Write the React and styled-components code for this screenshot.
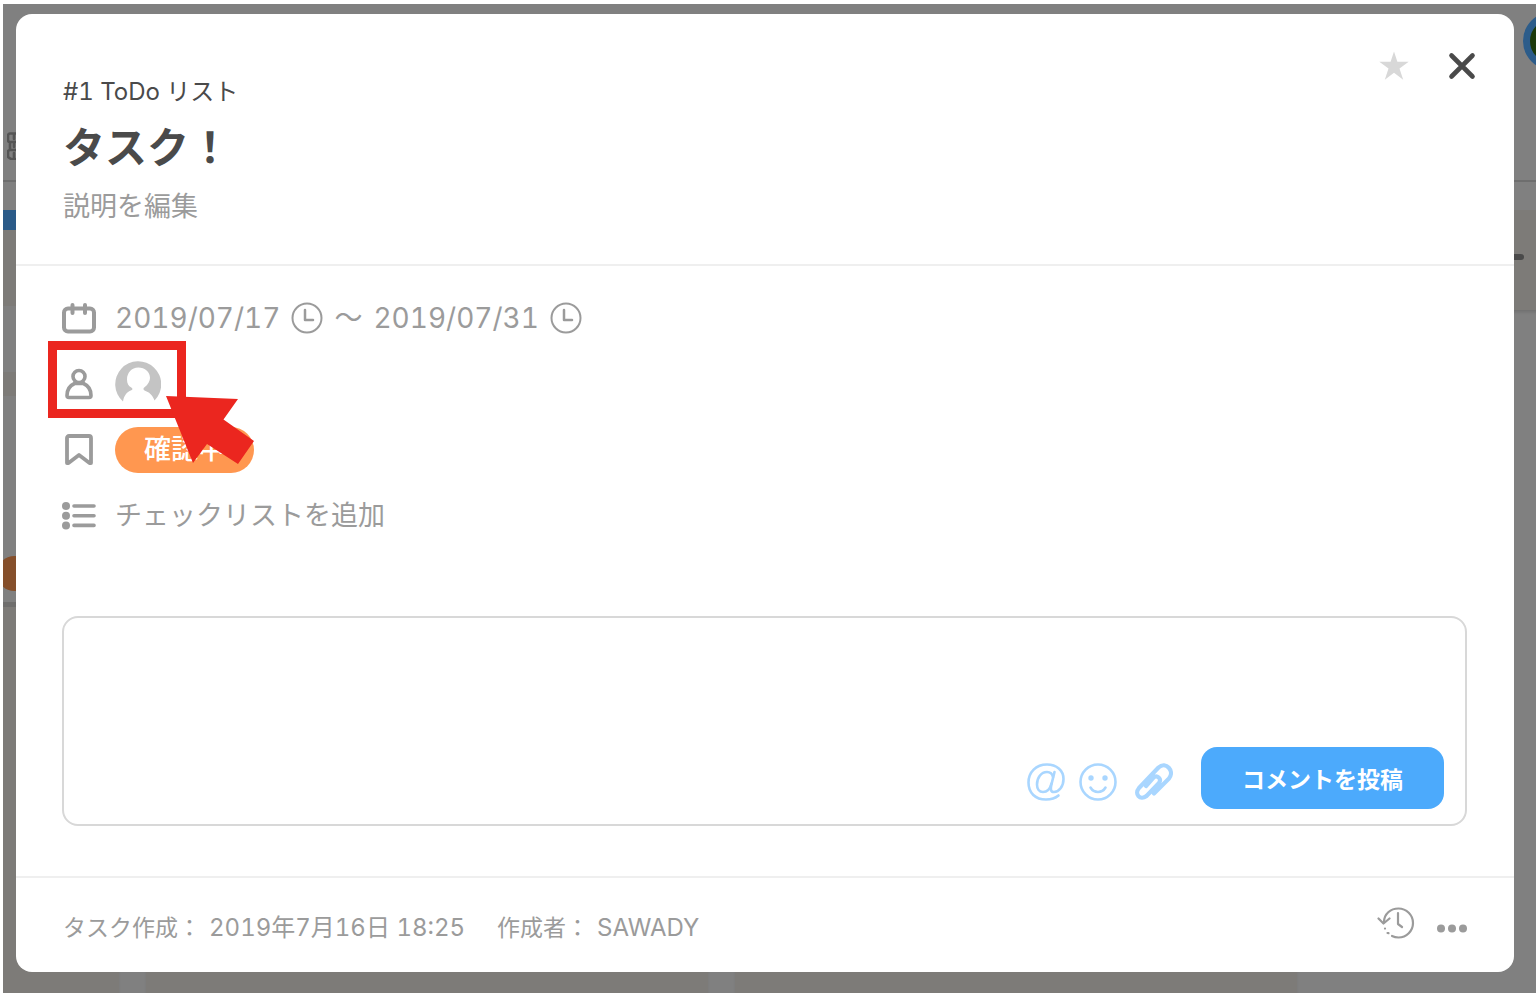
import React from "react";
import styled, { createGlobalStyle } from "styled-components";

const GlobalStyle = createGlobalStyle`
  *, *::before, *::after { box-sizing: border-box; }
  body {
    margin: 0;
    background: #fff;
    font-family: Inter, "Noto Sans CJK JP", sans-serif;
    font-variant-numeric: tabular-nums;
    color: #9b9b9b;
  }
  button {
    font: inherit;
    color: inherit;
    border: 0;
    padding: 0;
    background: none;
    cursor: pointer;
  }
  svg { display: block; flex: none; }
  p, h1 { margin: 0; }
`;

const Stage = styled.div`
  display: grid;
  grid-template: minmax(calc(100vh - 6px), auto) / minmax(0, 1fr);
  margin: 4px 0 2px 3px;
  background: #808080;
  overflow: hidden;
`;

const Backdrop = styled.div`
  grid-area: 1 / 1;
  display: flex;
  flex-direction: column;
  min-width: 0;
  overflow: hidden;
`;

const TopBar = styled.div`
  display: flex;
  flex-direction: column;
  justify-content: space-between;
  height: 178px;
  padding: 8px 0 20px 4px;
  border-bottom: 2px solid #6e6e6e;
`;

const Avatar = styled.div`
  align-self: flex-end;
  width: 58px;
  height: 58px;
  margin-right: -45px;
  border: 7px solid #2c5c8a;
  border-radius: 50%;
  background: #1c3a0c;
`;

const Board = styled.div`
  flex: 1;
  display: flex;
  align-items: stretch;
  gap: 27px;
  margin: 28px 0 0 -446px;
`;

const Column = styled.div`
  flex: none;
  align-self: ${(p) => (p.$short ? "flex-start" : "stretch")};
  display: flex;
  flex-direction: column;
  width: 562px;
  height: ${(p) => (p.$short ? "100px" : "auto")};
  background: #7d7b78;
  box-shadow: 0 3px 3px -1px #707070;
`;

const ColumnBar = styled.div`
  height: 20px;
  background: #2a5a88;
`;

const BoardCard = styled.div`
  display: flex;
  flex-direction: column;
  justify-content: flex-end;
  height: ${(p) => p.$height}px;
  margin-top: ${(p) => p.$gap}px;
  padding: 0 0 11px 440px;
  background: #808080;
  border-bottom: ${(p) => (p.$edge ? "5px solid #6f6e6d" : "0")};
`;

const BoardTag = styled.div`
  width: 90px;
  height: 35px;
  border-radius: 18px;
  background: #854f2b;
`;

const AddMark = styled.div`
  width: 30px;
  height: 6px;
  margin: 44px 0 0 170px;
  border-radius: 3px;
  background: #4a4a4a;
`;

const Dialog = styled.section`
  grid-area: 1 / 1;
  z-index: 1;
  display: flex;
  flex-direction: column;
  margin: 10px 22px 21px 13px;
  border-radius: 16px;
  background: #fff;
`;

const Header = styled.header`
  display: flex;
  justify-content: space-between;
  align-items: flex-start;
  padding: 36px 36px 36px 47px;
  border-bottom: 2px solid #efefef;
`;

const Heading = styled.div`
  padding-top: 24px;
`;

const ListName = styled.p`
  color: #4a4a4a;
  font-size: 24px;
  line-height: 36px;
`;

const Title = styled.h1`
  color: #4a4a4a;
  font-size: 42px;
  font-weight: 700;
  line-height: 76px;
`;

const TextButton = styled.button`
  display: block;
  font-size: 27px;
  line-height: 42px;
`;

const Actions = styled.div`
  display: flex;
  align-items: center;
  gap: ${(p) => p.$gap}px;
`;

const IconButton = styled.button`
  display: flex;
  align-items: center;
  justify-content: center;
`;

const Details = styled.div`
  flex: 1;
  padding: 19px 47px 50px 46px;
`;

const Row = styled.div`
  position: relative;
  display: flex;
  align-items: center;
  gap: 19px;
  height: 66px;
`;

const DateRange = styled.div`
  display: flex;
  align-items: center;
  gap: 11px;
  font-size: 28px;
  line-height: 40px;
`;

const Status = styled.button`
  width: 139px;
  height: 46px;
  border-radius: 23px;
  background: #ff9750;
  color: #fff;
  font-size: 27px;
  font-weight: 500;
  line-height: 42px;
`;

const Callout = styled.svg`
  position: absolute;
  left: -14px;
  top: -10px;
  z-index: 1;
  pointer-events: none;
`;

const Comment = styled.form`
  display: flex;
  flex-direction: column;
  height: 210px;
  margin-top: 67px;
  padding: 16px 21px 15px;
  border: 2px solid #d8d8d8;
  border-radius: 16px;
`;

const CommentInput = styled.textarea`
  flex: 1;
  width: 100%;
  border: 0;
  padding: 0;
  outline: 0;
  resize: none;
  background: none;
  font: inherit;
  font-size: 27px;
`;

const CommentTools = styled.div`
  display: flex;
  justify-content: flex-end;
  align-items: center;
  gap: 28px;
`;

const Attachments = styled(Actions)`
  padding-top: 8px;
`;

const Submit = styled.button`
  width: 243px;
  height: 62px;
  border-radius: 16px;
  background: #4caafc;
  color: #fff;
  font-size: 23px;
  font-weight: 700;
`;

const Footer = styled.footer`
  display: flex;
  align-items: center;
  justify-content: space-between;
  height: 96px;
  padding: 0 47px 4px;
  border-top: 2px solid #efefef;
`;

const Meta = styled.div`
  display: flex;
  gap: 32px;
  padding-top: 10px;
  font-size: 23px;
  line-height: 36px;
`;

const MetaItem = styled.p`
  display: flex;
  gap: 8px;
`;

const MetaValue = styled.span`
  font-size: 24px;
`;

const stroke = (width, color = "#9b9b9b") => ({
  fill: "none",
  stroke: color,
  strokeWidth: width,
  strokeLinecap: "round",
  strokeLinejoin: "round",
});

const BLUE = "#a9d6ff";

const BuildingIcon = () => (
  <svg width="30" height="28" viewBox="0 0 30 28" {...stroke(2.6, "#555")}>
    <path d="M3 1.500h22v8.500H3a2 2 0 0 1-2-2V3.500a2 2 0 0 1 2-2zM3 10h22v8H3zM3 18a2 2 0 0 0-2 2v5l3 2h22M7 3v4M12 3v4M7 12v3M12 12v3M7 21v4M12 21v4" />
  </svg>
);

const StarIcon = () => (
  <svg width="30" height="30" viewBox="0 0 30 30" fill="#d8d8d8">
    <path d="M15 0.500l3.400 10.300h11.300l-9.200 6.700 3.700 11.200-9.200-6.900-9.200 6.900 3.700-11.200-9.200-6.700h11.300z" />
  </svg>
);

const CloseIcon = () => (
  <svg width="32" height="32" viewBox="0 0 32 32" {...stroke(4.6, "#4a4a4a")}>
    <path d="M5.500 5.500l21 21M26.500 5.500l-21 21" />
  </svg>
);

const CalendarIcon = () => (
  <svg width="34" height="32" viewBox="0 0 34 32" {...stroke(4)}>
    <rect x="2" y="6.500" width="30" height="23" rx="4" />
    <path d="M10.500 3v8M23 3v8" />
  </svg>
);

const PersonIcon = () => (
  <svg width="34" height="32" viewBox="0 0 34 32" {...stroke(3.6)}>
    <circle cx="17" cy="8.500" r="6" />
    <path d="M12.500 15.500C8 17.500 5 21 5 27.500c0 1.500.5 2 2 2h20c1.500 0 2-.5 2-2 0-6.500-3-10-7.500-12h-9" />
  </svg>
);

const DefaultAvatar = () => (
  <svg width="46" height="46" viewBox="0 0 46 46">
    <path
      fill="#c4c4c4"
      d="M8 40.500A23 23 0 1 1 39.500 39.500C37.500 34 34 31 29.500 29.500c-1.500-.7-1.300-2.200 0-3.200 3.500-2.500 5.500-6.300 5.500-9.300 0-6-5-10.500-11.700-10.500S12 12 12 18.500c0 4 1.500 6.500 4.300 8 1.500 1 1.500 2 0 2.800C11.500 31 9 35 8 40.500z"
    />
  </svg>
);

const BookmarkIcon = () => (
  <svg width="34" height="32" viewBox="0 0 34 32" {...stroke(3.8)}>
    <path d="M7 2h20a2 2 0 0 1 2 2v25h-1.500L17 21 6.500 29H5V4a2 2 0 0 1 2-2z" />
  </svg>
);

const ChecklistIcon = () => (
  <svg width="34" height="28" viewBox="0 0 34 28">
    <g fill="#9b9b9b">
      <circle cx="4" cy="4" r="4" />
      <circle cx="4" cy="13.700" r="4" />
      <circle cx="4" cy="23.400" r="4" />
    </g>
    <path d="M12 4h20M12 13.700h20M12 23.400h20" {...stroke(3.6)} />
  </svg>
);

const ClockIcon = () => (
  <svg width="32" height="32" viewBox="0 0 32 32" {...stroke(2)}>
    <circle cx="16" cy="16" r="14.500" />
    <path d="M14 8v10h8" strokeWidth="2.500" />
  </svg>
);

const MentionIcon = () => (
  <svg width="38" height="38" viewBox="0 0 38 38" {...stroke(2.6, BLUE)}>
    <path d="M31.500 32.500C28 35.500 24 36.500 19 36.500 8.500 36.500 1.500 30 1.500 19.500S9 1.500 20 1.500c9.500 0 16.500 6 16.500 14.500 0 7.500-4.500 13-9.500 13-3.500 0-3.500-3-2.800-6.500L27.500 9" />
    <path d="M26 14c-.7-3.500-3-5-6-5-6 0-10 6-10 12.500 0 4.500 2.300 7.500 6 7.500 4.300 0 7.200-3.500 8.500-8.500" />
  </svg>
);

const SmileIcon = () => (
  <svg width="38" height="38" viewBox="0 0 38 38" {...stroke(2.6, BLUE)}>
    <circle cx="19" cy="19" r="17.500" />
    <path d="M11.500 24.500c3.500 6 11.500 6 15 0" />
    <g fill={BLUE} stroke="none">
      <circle cx="12" cy="15" r="2.700" />
      <circle cx="26" cy="15" r="2.700" />
    </g>
  </svg>
);

const ClipIcon = () => (
  <svg width="42" height="38" viewBox="-4 0 42 38" {...stroke(4.2, BLUE)}>
    <path d="M19 30.500L34 15.500C40 8 31-2 23.500 4.500L4 25C-1 31 5 38 11.500 33L24 20C27 15.500 22 11.500 18.500 14.500L11 23" />
  </svg>
);

const HistoryIcon = () => (
  <svg width="38" height="32" viewBox="0 0 38 32" {...stroke(2.2)}>
    <path d="M7 15C7 7 13.500 1.500 21.500 1.500S36 8 36 16s-6.500 14.500-14.500 14.500c-2.500 0-4.700-.6-6.500-1.500" />
    <path d="M1.500 11.500l5 5 6-5M21 6v11l4 3" />
    <path d="M8 21.500v.1M10.500 26l1 .2" />
  </svg>
);

const MoreIcon = () => (
  <svg width="30" height="20" viewBox="0 0 30 20" fill="#9b9b9b">
    <circle cx="4" cy="15.500" r="4" />
    <circle cx="15" cy="15.500" r="4" />
    <circle cx="26" cy="15.500" r="4" />
  </svg>
);

const AssigneeCallout = () => (
  <Callout width="208" height="124" viewBox="0 0 208 124" aria-hidden="true">
    <rect x="4.500" y="4.500" width="129" height="68" fill="none" stroke="#eb261f" strokeWidth="9" />
    <path fill="#eb261f" d="M118 55l72 3-14.500 20.500L206 100l-16 23-31-20-14 19z" />
  </Callout>
);

export default function App() {
  return (
    <>
      <GlobalStyle />
      <Stage>
        <Backdrop aria-hidden="true">
          <TopBar>
            <Avatar />
            <BuildingIcon />
          </TopBar>
          <Board>
            <Column>
              <ColumnBar />
              <BoardCard $gap={76} $height={66} />
              <BoardCard $gap={24} $height={211} $edge>
                <BoardTag />
              </BoardCard>
            </Column>
            <Column />
            <Column />
            <Column $short>
              <AddMark />
            </Column>
          </Board>
        </Backdrop>

        <Dialog role="dialog" aria-labelledby="task-title">
          <Header>
            <Heading>
              <ListName>#1 ToDo リスト</ListName>
              <Title id="task-title">タスク！</Title>
              <TextButton type="button">説明を編集</TextButton>
            </Heading>
            <Actions $gap={37}>
              <IconButton type="button" aria-label="お気に入り"><StarIcon /></IconButton>
              <IconButton type="button" aria-label="閉じる"><CloseIcon /></IconButton>
            </Actions>
          </Header>

          <Details>
            <Row>
              <CalendarIcon />
              <DateRange>
                <span>2019/07/17</span>
                <IconButton type="button" aria-label="開始時刻"><ClockIcon /></IconButton>
                <span>〜</span>
                <span>2019/07/31</span>
                <IconButton type="button" aria-label="終了時刻"><ClockIcon /></IconButton>
              </DateRange>
            </Row>
            <Row>
              <PersonIcon />
              <IconButton type="button" aria-label="担当者"><DefaultAvatar /></IconButton>
              <AssigneeCallout />
            </Row>
            <Row>
              <BookmarkIcon />
              <Status type="button">確認中</Status>
            </Row>
            <Row>
              <ChecklistIcon />
              <TextButton type="button">チェックリストを追加</TextButton>
            </Row>

            <Comment onSubmit={(e) => e.preventDefault()}>
              <CommentInput aria-label="コメント" />
              <CommentTools>
                <Attachments $gap={14}>
                  <IconButton type="button" aria-label="メンション"><MentionIcon /></IconButton>
                  <IconButton type="button" aria-label="絵文字"><SmileIcon /></IconButton>
                  <IconButton type="button" aria-label="ファイルを添付"><ClipIcon /></IconButton>
                </Attachments>
                <Submit type="submit">コメントを投稿</Submit>
              </CommentTools>
            </Comment>
          </Details>

          <Footer>
            <Meta>
              <MetaItem><span>タスク作成：</span><MetaValue>2019年7月16日 18:25</MetaValue></MetaItem>
              <MetaItem><span>作成者：</span><MetaValue>SAWADY</MetaValue></MetaItem>
            </Meta>
            <Actions $gap={22}>
              <IconButton type="button" aria-label="履歴"><HistoryIcon /></IconButton>
              <IconButton type="button" aria-label="その他"><MoreIcon /></IconButton>
            </Actions>
          </Footer>
        </Dialog>
      </Stage>
    </>
  );
}
